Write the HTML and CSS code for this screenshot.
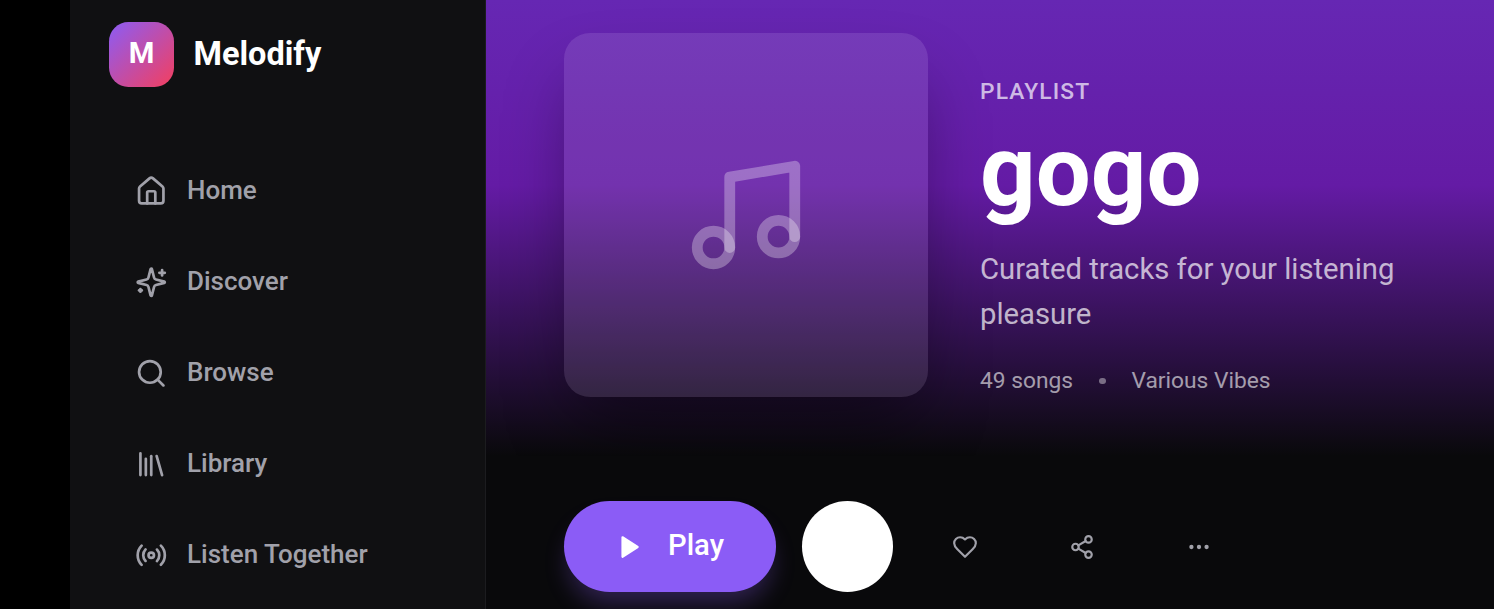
FILE: index.html
```html
<!DOCTYPE html>
<html lang="en">
<head>
  <meta charset="UTF-8" />
  <meta name="viewport" content="width=device-width, initial-scale=1.0"/>
  <title>Melodify</title>
  <link rel="stylesheet" href="styles.css">
</head>
<body>
  <div class="app">
    <aside class="sidebar">
      <div class="brand">
        <div class="logo">M</div>
        <span class="brand-name">Melodify</span>
      </div>
      <nav>
        <a class="nav-item">
          <svg class="icon" viewBox="0 0 24 24"><path d="M15 21v-8a1 1 0 0 0-1-1h-4a1 1 0 0 0-1 1v8"/><path d="M3 10a2 2 0 0 1 .709-1.528l7-5.999a2 2 0 0 1 2.582 0l7 5.999A2 2 0 0 1 21 10v9a2 2 0 0 1-2 2H5a2 2 0 0 1-2-2z"/></svg>
          <span>Home</span>
        </a>
        <a class="nav-item">
          <svg class="icon" viewBox="0 0 24 24"><path d="M9.937 15.5A2 2 0 0 0 8.5 14.063l-6.135-1.582a.5.5 0 0 1 0-.962L8.5 9.936A2 2 0 0 0 9.937 8.5l1.582-6.135a.5.5 0 0 1 .963 0L14.063 8.5A2 2 0 0 0 15.5 9.937l6.135 1.581a.5.5 0 0 1 0 .964L15.5 14.063a2 2 0 0 0-1.437 1.437l-1.582 6.135a.5.5 0 0 1-.963 0z"/><path d="M20 3v4"/><path d="M22 5h-4"/><path d="M4 17v2"/><path d="M5 18H3"/></svg>
          <span>Discover</span>
        </a>
        <a class="nav-item">
          <svg class="icon" viewBox="0 0 24 24"><circle cx="11" cy="11" r="8"/><path d="m21 21-4.3-4.3"/></svg>
          <span>Browse</span>
        </a>
        <a class="nav-item">
          <svg class="icon" viewBox="0 0 24 24"><path d="m16 6 4 14"/><path d="M12 6v14"/><path d="M8 8v12"/><path d="M4 4v16"/></svg>
          <span>Library</span>
        </a>
        <a class="nav-item">
          <svg class="icon" viewBox="0 0 24 24"><path d="M4.9 19.1C1 15.2 1 8.8 4.9 4.9"/><path d="M7.8 16.2c-2.3-2.3-2.3-6.1 0-8.5"/><circle cx="12" cy="12" r="2"/><path d="M16.2 7.8c2.3 2.3 2.3 6.1 0 8.5"/><path d="M19.1 4.9C23 8.8 23 15.1 19.1 19"/></svg>
          <span>Listen Together</span>
        </a>
      </nav>
    </aside>

    <main>
      <header class="hero">
        <div class="cover">
          <svg viewBox="0 0 24 24"><path d="M9 18V5l12-2v13"/><circle cx="6" cy="18" r="3"/><circle cx="18" cy="16" r="3"/></svg>
        </div>
        <div class="info">
          <p class="type">PLAYLIST</p>
          <h1>gogo</h1>
          <p class="description">Curated tracks for your listening pleasure</p>
          <div class="meta">
            <span>49 songs</span>
            <span class="dot"></span>
            <span>Various Vibes</span>
          </div>
        </div>
      </header>

      <div class="actions">
        <button class="play-btn">
          <svg viewBox="0 0 24 24"><polygon points="6 3 20 12 6 21 6 3"/></svg>
          <span>Play</span>
        </button>
        <button class="round-btn white" aria-label="Shuffle"></button>
        <button class="round-btn" aria-label="Like">
          <svg viewBox="0 0 24 24"><path d="M19 14c1.49-1.46 3-3.21 3-5.5A5.5 5.5 0 0 0 16.5 3c-1.76 0-3 .5-4.5 2-1.5-1.5-2.74-2-4.5-2A5.5 5.5 0 0 0 2 8.5c0 2.3 1.5 4.05 3 5.5l7 7Z"/></svg>
        </button>
        <button class="round-btn" aria-label="Share">
          <svg viewBox="0 0 24 24"><circle cx="18" cy="5" r="3"/><circle cx="6" cy="12" r="3"/><circle cx="18" cy="19" r="3"/><path d="m8.59 13.51 6.83 3.98"/><path d="m15.41 6.51-6.82 3.98"/></svg>
        </button>
        <button class="round-btn" aria-label="More">
          <svg viewBox="0 0 24 24"><circle cx="12" cy="12" r="1"/><circle cx="19" cy="12" r="1"/><circle cx="5" cy="12" r="1"/></svg>
        </button>
      </div>
    </main>
  </div>
</body>
</html>
```

FILE: styles.css
```css
* {
  box-sizing: border-box;
}

html, body {
  margin: 0;
  padding: 0;
  height: 100%;
  background: #000;
  color: #fff;
  font-family: Roboto, sans-serif;
  overflow: hidden;
}

h1, p {
  margin: 0;
}

svg {
  display: block;
  flex-shrink: 0;
  fill: none;
  stroke: currentColor;
  stroke-width: 2;
  stroke-linecap: round;
  stroke-linejoin: round;
}

.app {
  display: flex;
  height: 100%;
  padding-left: 70px;
}

.sidebar {
  width: 416px;
  flex-shrink: 0;
  padding: 22px 39px 0;
  background: #101012;
  border-right: 1px solid #1c1c1f;
}

.brand {
  display: flex;
  align-items: center;
  gap: 19.5px;
}

.logo {
  width: 65px;
  height: 65px;
  border-radius: 19.5px;
  background: linear-gradient(135deg, #8b5cf6, #f43f5e);
  font-size: 29.25px;
  font-weight: 700;
  line-height: 63px;
  text-align: center;
}

.brand-name {
  font-size: 32.5px;
  font-weight: 700;
  line-height: 45px;
  padding-bottom: 1px;
}

nav {
  display: flex;
  flex-direction: column;
  gap: 13px;
  margin-top: 65px;
}

.nav-item {
  display: flex;
  align-items: center;
  gap: 19.5px;
  height: 78px;
  padding: 0 26px;
  color: #a1a1aa;
  font-size: 26px;
  font-weight: 500;
}

.nav-item span {
  padding-bottom: 2px;
  white-space: nowrap;
}

.icon {
  width: 32.5px;
  height: 32.5px;
}

main {
  flex: 1;
  min-width: 0;
  background: #09090b;
}

.hero {
  display: flex;
  align-items: flex-end;
  gap: 52px;
  height: 456px;
  padding: 33px 78px 59px;
  background: linear-gradient(#6627b3 0, #641ba5 185px, #09090b 456px);
  overflow: hidden;
}

.cover {
  display: flex;
  align-items: center;
  justify-content: center;
  width: 364px;
  height: 364px;
  flex-shrink: 0;
  border-radius: 26px;
  background: rgba(255, 255, 255, 0.1);
  box-shadow: 0 40px 70px -13px rgba(0, 0, 0, 0.4);
  color: rgba(255, 255, 255, 0.3);
}

.cover svg {
  width: 130px;
  height: 130px;
}

.type {
  color: rgba(255, 255, 255, 0.7);
  font-size: 22.75px;
  font-weight: 500;
  letter-spacing: 0.05em;
  line-height: 32px;
}

h1 {
  margin: 16px 0 25px;
  font-size: 97.5px;
  font-weight: 700;
  line-height: 97.5px;
}

.description {
  color: rgba(255, 255, 255, 0.7);
  font-size: 29.25px;
  line-height: 45.5px;
}

.meta {
  display: flex;
  align-items: center;
  gap: 26px;
  margin-top: 27.5px;
  color: rgba(255, 255, 255, 0.6);
  font-size: 22.75px;
  line-height: 32px;
}

.dot {
  width: 6.5px;
  height: 6.5px;
  border-radius: 50%;
  background: rgba(255, 255, 255, 0.4);
}

.actions {
  display: flex;
  gap: 26px;
  padding: 45px 78px 0;
}

button {
  padding: 0;
  border: none;
  background: none;
  color: #a1a1aa;
  font-family: inherit;
  cursor: pointer;
}

button svg {
  width: 26px;
  height: 26px;
}

.play-btn {
  display: flex;
  align-items: center;
  gap: 26px;
  height: 91px;
  padding: 0 52px;
  border-radius: 46px;
  background: #8b5cf6;
  box-shadow: 0 16px 24px -5px rgba(139, 92, 246, 0.3);
  color: #fff;
  font-size: 29.25px;
  font-weight: 500;
}

.play-btn svg {
  fill: currentColor;
}

.play-btn span {
  padding-bottom: 3px;
}

.round-btn {
  display: flex;
  align-items: center;
  justify-content: center;
  width: 91px;
  height: 91px;
  border-radius: 50%;
}

.white {
  background: #fff;
}
```
